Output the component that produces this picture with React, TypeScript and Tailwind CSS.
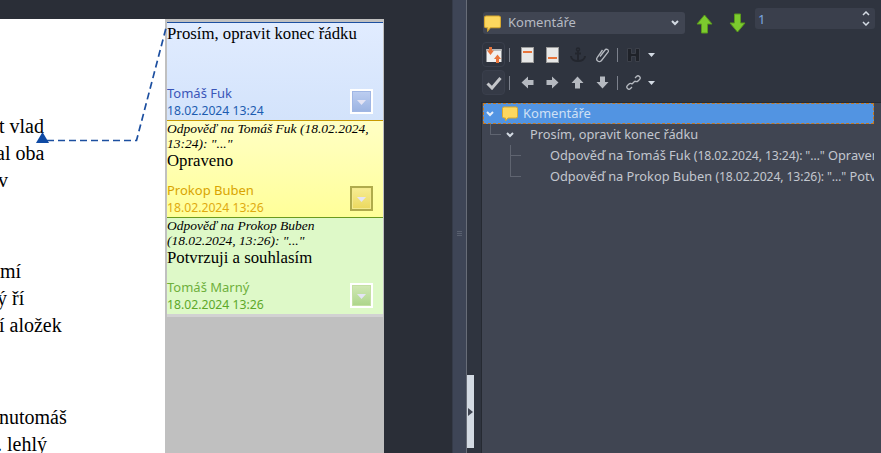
import React from "react";

const serif = { fontFamily: '"Liberation Serif", serif' };

function Bubble({ size = 16 }: { size?: number }) {
  return (
    <svg width={size} height={size} viewBox="0 0 16 16" className="shrink-0">
      <path d="M2 1h12a1.500 1.500 0 0 1 1.500 1.500v8A1.500 1.500 0 0 1 14 12H6l-2.500 3v-3H2A1.500 1.500 0 0 1 .5 10.500v-8A1.500 1.500 0 0 1 2 1z" fill="#fcd75f" stroke="#d8a92e" strokeWidth="1" />
    </svg>
  );
}

function Chevron({ color = "#d3dae3" }: { color?: string }) {
  return (
    <svg width="8" height="6" viewBox="0 0 8 6" className="shrink-0">
      <path d="M1 1l3 3 3-3" fill="none" stroke={color} strokeWidth="2" />
    </svg>
  );
}

function Triangle({ className = "" }: { className?: string }) {
  return (
    <svg width="7" height="4" viewBox="0 0 7 4" className={className}>
      <path d="M0 0h7L3.500 4z" fill="#d3dae3" />
    </svg>
  );
}

function Sep() {
  return <div className="w-px h-[14px] bg-[#7c818c] mx-[4px]" />;
}

function Arrow({ dir }: { dir: "up" | "down" | "left" | "right" }) {
  const rot = { up: 0, right: 90, down: 180, left: 270 }[dir];
  return (
    <svg width="13" height="13" viewBox="0 0 13 13" style={{ transform: `rotate(${rot}deg)` }}>
      <path d="M6.500 0.500L12.500 7H9v5.500H4V7H.5z" fill="#b5b9c0" />
    </svg>
  );
}

function BigArrow({ down }: { down?: boolean }) {
  return (
    <svg width="17" height="20" viewBox="0 0 17 20" style={down ? { transform: "rotate(180deg)" } : undefined}>
      <path d="M8.500 1L16 10h-4.500v9h-6v-9H1z" fill="#7ccb2e" stroke="#5a9a1c" strokeWidth="1" />
    </svg>
  );
}

function PageIcon({ bottom }: { bottom?: boolean }) {
  return (
    <svg width="13" height="16" viewBox="0 0 13 16">
      <rect x="0.500" y="0.500" width="12" height="15" fill="#e8e8e8" stroke="#9a9a9a" />
      <rect x="2" y={bottom ? 10 : 4} width="9" height="2" fill="#e8743b" />
    </svg>
  );
}

function NoteButton({ border, from, to, frame }: { border: string; from: string; to: string; frame: string }) {
  return (
    <div className={`w-[23px] h-[25px] border-2 p-0 ${frame}`}>
      <div className={`w-full h-full border flex items-end justify-center pb-[6px] bg-gradient-to-b ${border} ${from} ${to}`}>
        <svg width="9" height="5" viewBox="0 0 9 5">
          <path d="M0 0h9L4.500 5z" fill="#e4e4f4" />
        </svg>
      </div>
    </div>
  );
}

function Note(props: {
  className: string;
  meta?: string[];
  body: string;
  bodyClass: string;
  author: string;
  date: string;
  authorClass: string;
  dateClass: string;
  button: React.ReactNode;
}) {
  return (
    <div className={`relative flex flex-col ${props.className}`}>
      {props.meta && (
        <div className="italic text-[13.500px] leading-[15px] text-black" style={serif}>
          {props.meta.map((m) => (
            <div key={m} className="whitespace-nowrap">{m}</div>
          ))}
        </div>
      )}
      <div className={`text-[16.750px] leading-[19px] text-black whitespace-nowrap ${props.bodyClass}`} style={serif}>{props.body}</div>
      <div className="mt-auto flex items-end justify-between pr-[10px]">
        <div className="text-[13px] leading-[18px] font-['Noto_Sans',sans-serif]">
          <div className={props.authorClass}>{props.author}</div>
          <div className={`text-[12.200px] ${props.dateClass}`}>{props.date}</div>
        </div>
        <div className="mb-[6px]">{props.button}</div>
      </div>
    </div>
  );
}

function DocLine({ text, left, className = "" }: { text: string; left: number; className?: string }) {
  return (
    <div className={`h-[27px] leading-[27px] whitespace-nowrap ${className}`} style={{ marginLeft: left }}>
      {text}
    </div>
  );
}

export default function App() {
  return (
    <div className="w-[881px] h-[453px] overflow-hidden flex bg-[#2a2e37] font-['Noto_Sans',sans-serif]">
      {/* Dokument + komentare */}
      <div className="relative w-[452px] shrink-0 pt-[19px]">
        <div className="flex h-[434px] w-[384px]">
          <div className="w-[165px] bg-white overflow-hidden text-[20px] text-black pt-[94px]" style={serif}>
            <DocLine text="t vlad" left={-1} />
            <DocLine text="al oba" left={-4} />
            <DocLine text="v" left={-2} />
            <DocLine text="mí" left={0} className="mt-[64px]" />
            <DocLine text="ý ří" left={-3} />
            <DocLine text="í aložek" left={-1} />
            <DocLine text="nutomáš" left={-1} className="mt-[65px]" />
            <DocLine text=". lehlý" left={-3} />
          </div>
          <div className="w-[219px] bg-[#c0c0c0] pl-[2px] pr-px pt-[3px] flex flex-col">
            <Note
              className="h-[98px] border-t border-[#1c4fa0] bg-gradient-to-b from-[#e1ecff] to-[#d3e3fb]"
              body="Prosím, opravit konec řádku"
              bodyClass="pt-[1px]"
              author="Tomáš Fuk"
              date="18.02.2024 13:24"
              authorClass="text-[#3a55b8]"
              dateClass="text-[#1c5cb0]"
              button={<NoteButton frame="border-white" border="border-[#a0b6e4]" from="from-[#bccdf0]" to="to-[#9cb4e2]" />}
            />
            <Note
              className="h-[97px] border-t border-[#c79a00] bg-gradient-to-b from-[#ffffc4] to-[#ffff98]"
              meta={["Odpověď na Tomáš Fuk (18.02.2024,", "13:24): \"...\""]}
              body="Opraveno"
              bodyClass=""
              author="Prokop Buben"
              date="18.02.2024 13:26"
              authorClass="text-[#d9a400]"
              dateClass="text-[#e0aa10]"
              button={<NoteButton frame="border-[#b0ab4c]" border="border-[#f4ea8c]" from="from-[#f6ec90]" to="to-[#ecd960]" />}
            />
            <Note
              className="h-[97px] border-t border-[#6a9a1f] bg-[#def9c8]"
              meta={["Odpověď na Prokop Buben", "(18.02.2024, 13:26): \"...\""]}
              body="Potvrzuji a souhlasím"
              bodyClass=""
              author="Tomáš Marný"
              date="18.02.2024 13:26"
              authorClass="text-[#6eb03c]"
              dateClass="text-[#5ca828]"
              button={<NoteButton frame="border-white" border="border-[#c4e0a4]" from="from-[#d0e8b4]" to="to-[#aed68c]" />}
            />
            <div className="h-[3px] bg-[#d2d2d2]" />
          </div>
        </div>
        {/* spojnice komentare a ukotveni */}
        <svg className="absolute left-0 top-0" width="180" height="150" viewBox="0 0 180 150">
          <path d="M47 140.500H136.500L166 28" fill="none" stroke="#1c4fa0" strokeWidth="1.700" strokeDasharray="7 4" />
          <path d="M36 143l6.500-11 6.500 11z" fill="#0f4aa4" />
        </svg>
      </div>

      {/* Sash */}
      <div className="w-[14px] bg-[#3e4556] shrink-0 border-l border-[#353b49] flex items-center justify-center">
        <div className="flex flex-col gap-[1px] mt-[14px]">
          <div className="w-[5px] h-px bg-[#59606f]" />
          <div className="w-[5px] h-px bg-[#59606f]" />
          <div className="w-[5px] h-px bg-[#59606f]" />
        </div>
      </div>
      <div className="relative w-[15px] shrink-0 bg-[#2f343f] border-l border-[#686d78]">
        <div className="absolute left-0 top-[375px] w-[7px] h-[73px] bg-[#d3dae3] flex items-center">
          <svg width="5" height="8" viewBox="0 0 5 8" className="ml-[1px]">
            <path d="M0 0l5 4-5 4z" fill="#404552" />
          </svg>
        </div>
      </div>

      {/* Navigator */}
      <div className="flex-1 min-w-0 bg-[#2f343f] pt-[8px] flex flex-col">
        <div className="flex items-start h-[27px] pl-[2px]">
          <div className="mt-[4px] w-[202px] h-[22px] rounded-[3px] bg-[#404552] flex items-center pl-[1px] pr-[6px] text-[13px] text-[#b6bac2]">
            <Bubble size={17} />
            <span className="ml-[7px] flex-1">Komentáře</span>
            <Chevron />
          </div>
          <div className="ml-[11px] mt-[6px]"><BigArrow /></div>
          <div className="ml-[16px] mt-[5px]"><BigArrow down /></div>
          <div className="ml-[9px] w-[120px] h-[21px] rounded-[3px] bg-[#3a3f4c] flex items-center px-[3px] text-[13px] text-[#7aa8e0] leading-none">
            <span className="flex-1 mt-[1px]">1</span>
            <div className="flex flex-col gap-[5px] mr-[2px]">
              <svg width="8" height="5" viewBox="0 0 8 5"><path d="M1 4l3-3 3 3" fill="none" stroke="#d3dae3" strokeWidth="1.500" /></svg>
              <svg width="8" height="5" viewBox="0 0 8 5"><path d="M1 1l3 3 3-3" fill="none" stroke="#d3dae3" strokeWidth="1.500" /></svg>
            </div>
          </div>
        </div>

        <div className="flex items-center h-[25px] mt-[7px] pl-[1px]">
          <div className="w-[23px] h-[25px] rounded-[4px] border border-[#3a3f4c] bg-[#2f343f] flex items-center justify-center">
            <svg width="16" height="16" viewBox="0 0 16 16">
              <rect x="0.500" y="2" width="15" height="13" fill="#f0f0f0" />
              <rect x="0.500" y="2" width="15" height="2" fill="#b8b8b8" />
              <path d="M3 0h3v3.500h2L4.500 8 1 3.500h2z" fill="#e8743b" />
              <path d="M11.500 7.500L15 12h-2v4h-3v-4H8z" fill="#e8743b" />
            </svg>
          </div>
          <Sep />
          <div className="flex items-center ml-[7px]">
            <PageIcon />
            <div className="ml-[12px]"><PageIcon bottom /></div>
            <svg width="16" height="16" viewBox="0 0 16 16" className="ml-[11px]">
              <circle cx="8" cy="2.500" r="1.500" fill="none" stroke="#23262e" strokeWidth="1.500" />
              <path d="M8 4v10M5 6.500h6M1 9c0 3 3 5 7 5s7-2 7-5" fill="none" stroke="#23262e" strokeWidth="2" />
            </svg>
            <svg width="14" height="16" viewBox="0 0 14 16" className="ml-[10px]">
              <path d="M4 9.500l5-6.500a1.800 1.800 0 0 1 3 2.200L5.500 13.500a2.600 2.600 0 0 1-4.200-3.200L6.500 3" fill="none" stroke="#b5b9c0" strokeWidth="1.300" />
            </svg>
          </div>
          <div className="ml-[3px]"><Sep /></div>
          <svg width="13" height="14" viewBox="0 0 13 14" className="ml-[5px]">
            <path d="M.5 .5h4v5h4v-5h4v13h-4v-5h-4v5h-4z" fill="#1f2229" stroke="#3c404a" strokeWidth="1" />
          </svg>
          <Triangle className="ml-[8px]" />
        </div>

        <div className="flex items-center h-[25px] mt-[3px] pl-[1px]">
          <div className="w-[23px] h-[25px] rounded-[4px] border border-[#3a3f4c] bg-[#353a46] flex items-center justify-center">
            <svg width="16" height="14" viewBox="0 0 16 14">
              <path d="M1.500 7.500l4.500 4.500L14.500 2" fill="none" stroke="#c4c6ca" strokeWidth="3" />
            </svg>
          </div>
          <Sep />
          <div className="flex items-center gap-[12px] ml-[7px]">
            <Arrow dir="left" />
            <Arrow dir="right" />
            <Arrow dir="up" />
            <Arrow dir="down" />
          </div>
          <div className="ml-[4px]"><Sep /></div>
          <svg width="15" height="15" viewBox="0 0 15 15" className="ml-[4px]">
            <path d="M6 9l3-3M9 3l1.500-1.500a2 2 0 0 1 3 3L12 6a2 2 0 0 1-3 0M6 12l-1.500 1.500a2 2 0 0 1-3-3L3 9a2 2 0 0 1 3 0" fill="none" stroke="#b5b9c0" strokeWidth="1.300" />
          </svg>
          <Triangle className="ml-[7px]" />
        </div>

        <div className="mt-[7px] flex-1 bg-[#404552] border-t border-l border-[#262a32] text-[12.800px] text-[#c3c7cf] overflow-hidden">
          <div className="w-[392px] overflow-hidden">
            <div className="h-[21px] ml-px bg-[#5294e2] border border-dashed border-[#c77a20] flex items-center pl-[2px] text-[13px] text-[#cfe0f5]">
              <Chevron color="#e4edf8" />
              <span className="ml-[8px]"><Bubble /></span>
              <span className="ml-[5px]">Komentáře</span>
            </div>
            <div className="relative h-[21px] flex items-center pl-[24px] whitespace-nowrap">
              <div className="absolute left-[8px] top-0 w-[11px] h-[11px] border-l border-b border-[#5f6470]" />
              <Chevron />
              <span className="ml-[16px]">Prosím, opravit konec řádku</span>
            </div>
            <div className="relative h-[21px] flex items-center pl-[68px] whitespace-nowrap">
              <div className="absolute left-[28px] top-0 w-[11px] h-[11px] border-l border-b border-[#5f6470]" />
              <span>Odpověď na Tomáš Fuk <span className="text-[12.200px] tracking-[-0.1px]">(18.02.2024, 13:24): "…"</span> Opraveno</span>
            </div>
            <div className="relative h-[21px] flex items-center pl-[68px] whitespace-nowrap">
              <div className="absolute left-[28px] -top-[10px] w-[11px] h-[21px] border-l border-b border-[#5f6470]" />
              <span>Odpověď na Prokop Buben <span className="text-[12.200px] tracking-[-0.1px]">(18.02.2024, 13:26): "…"</span> Potvrzuji a souhlasím</span>
            </div>
          </div>
        </div>
      </div>
    </div>
  );
}
